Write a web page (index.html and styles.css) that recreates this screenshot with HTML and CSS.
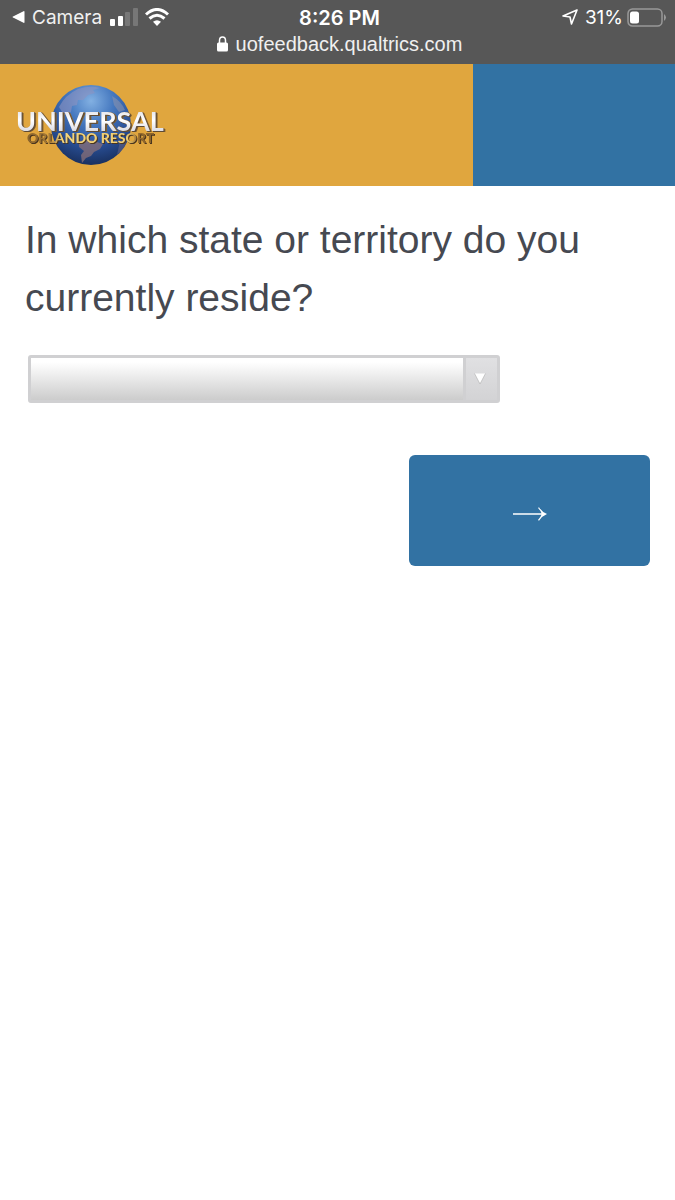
FILE: index.html
```
<!DOCTYPE html>
<html lang="en">
<head>
  <meta charset="UTF-8">
  <meta name="viewport" content="width=device-width, initial-scale=1">
  <title>Universal Orlando Resort Survey</title>
  <link rel="stylesheet" href="styles.css">
</head>
<body>
  <div class="status">
    <div class="status-row">
      <div class="status-left">
        <svg width="13" height="12" viewBox="0 0 13 12"><path d="M11.5 0.2Q12.5 -0.2 12.5 1V11Q12.5 12.200 11.5 11.800L1 6.6Q0 6 1 5.4Z" fill="#fff"/></svg>
        <a href="#" class="back">Camera</a>
        <svg class="signal" width="28" height="18" viewBox="0 0 28 18">
          <rect x="0" y="11" width="5" height="7" rx="1" fill="#fff"/>
          <rect x="8" y="8" width="5" height="10" rx="1" fill="#fff"/>
          <rect x="15" y="4" width="5" height="14" rx="1" fill="#777"/>
          <rect x="23" y="0" width="5" height="18" rx="1" fill="#777"/>
        </svg>
        <svg width="24" height="18" viewBox="0 0 24 18" fill="none" stroke="#fff" stroke-width="3">
          <path d="M1 6.500Q12 -3.500 23 6.500"/>
          <path d="M4.500 10.500Q12 4 19.500 10.500"/>
          <path d="M8 13.800Q12 10.500 16 13.800L12 18Z" fill="#fff" stroke="none"/>
        </svg>
      </div>
      <div class="time">8:26 PM</div>
      <div class="status-right">
        <svg width="16" height="16" viewBox="0 0 16 16" fill="none" stroke="#fff" stroke-width="1.600" stroke-linejoin="round"><path d="M15 1L1 7L8 8L9.500 15Z"/></svg>
        <span class="percent">31%</span>
        <svg width="40" height="19" viewBox="0 0 40 19">
          <rect x="1" y="1" width="34" height="17" rx="4.500" fill="none" stroke="#999" stroke-width="1.500"/>
          <rect x="3" y="3.500" width="9" height="12" rx="2.500" fill="#fff"/>
          <path d="M37 6Q41 9.500 37 13Z" fill="#999"/>
        </svg>
      </div>
    </div>
    <div class="address">
      <svg width="11" height="16" viewBox="0 0 11 16"><rect y="6.500" width="11" height="9" rx="1.500" fill="#fff"/><path d="M2.500 7V4.500Q2.500 1 5.500 1T8.500 4.500V7" fill="none" stroke="#fff" stroke-width="1.500"/></svg>
      <span>uofeedback.qualtrics.com</span>
    </div>
  </div>

  <header class="banner">
    <div class="banner-logo">
      <svg class="logo" width="156" height="88" viewBox="0 0 156 88" role="img" aria-label="Universal Orlando Resort">
        <defs>
          <radialGradient id="globe" cx="50%" cy="20%" r="80%">
            <stop offset="0" stop-color="#82b0e2"/>
            <stop offset="0.350" stop-color="#4679c0"/>
            <stop offset="0.700" stop-color="#294f96"/>
            <stop offset="1" stop-color="#19305f"/>
          </radialGradient>
          <linearGradient id="silver" x1="0" y1="0" x2="0" y2="1">
            <stop offset="0" stop-color="#d4d4dc"/>
            <stop offset="0.500" stop-color="#fff"/>
            <stop offset="1" stop-color="#c8c8d2"/>
          </linearGradient>
          <linearGradient id="gold" x1="0" y1="0" x2="1" y2="0">
            <stop offset="0" stop-color="#8a632a"/>
            <stop offset="0.180" stop-color="#a87c38"/>
            <stop offset="0.280" stop-color="#f2d47c"/>
            <stop offset="0.780" stop-color="#f0cd72"/>
            <stop offset="0.880" stop-color="#94692c"/>
            <stop offset="1" stop-color="#8a632a"/>
          </linearGradient>
        </defs>
        <circle cx="78" cy="44" r="40" fill="url(#globe)"/>
        <path d="M46 26Q52 14 65 8Q77 4 87 7L80 9L82 12L75 14L70 19L65 19L64 24L59 25L58 31L51 34Z" fill="#8d92c0" opacity=".6"/>
        <path d="M99 15Q108 20 112 29L106 31L101 24Z" fill="#8b93ae" opacity=".6"/>
        <path d="M66 60L78 59L90 63L87 68L81 71L78 75L73 77L69 82L68 74L71 70L66 66Z" fill="#8a7078" opacity=".75"/>
        <path d="M107 60L115 57Q111 69 104 74Z" fill="#6b6788" opacity=".5"/>
        <text class="logo-name" x="3" y="50" fill="url(#silver)">UNIVERSAL</text>
        <text class="logo-place" x="14" y="62" fill="url(#gold)">ORLANDO RESORT</text>
      </svg>
    </div>
    <div class="banner-side"></div>
  </header>

  <form class="survey">
    <label class="question" for="state">In which state or territory do you currently reside?</label>
    <div class="dropdown">
      <select id="state" name="state">
        <option value=""></option>
        <option>Alabama</option>
        <option>California</option>
        <option>Florida</option>
        <option>Georgia</option>
        <option>New York</option>
        <option>Puerto Rico</option>
        <option>Texas</option>
      </select>
      <span class="dropdown-arrow">
        <svg width="12" height="12" viewBox="0 0 12 12"><path d="M0.500 0.500H11.500L6 11Z" fill="#fff"/><path d="M0.500 0.500L6 11L11.500 0.500" fill="none" stroke="#b4b4b4" stroke-width=".7"/></svg>
      </span>
    </div>
    <button type="button" class="next" aria-label="Next">
      <svg width="34" height="14" viewBox="0 0 34 14"><path d="M0 6.200H28.500Q27.500 3.500 25 1L26 0.300Q29 5 34 7Q29 9 26 13.700L25 13Q27.500 10.500 28.500 7.800H0Z" fill="#fff"/></svg>
    </button>
  </form>
</body>
</html>
```
FILE: styles.css
```
* { box-sizing: border-box; }
body { margin: 0; background: #fff; font-family: "Liberation Sans", Arial, sans-serif; }
svg { display: block; flex: none; }

.status {
  height: 64px;
  padding: 6px 8px 0 12px;
  background: #575757;
  color: #fff;
  font-family: Inter, sans-serif;
  font-size: 19px;
  line-height: 24px;
}
.status-row {
  display: grid;
  grid-template-columns: 1fr auto 1fr;
  align-items: center;
}
.status-row svg { margin-bottom: 2px; }
.status-left, .status-right, .address { display: flex; align-items: center; }
.back { margin: 0 8px 0 7px; color: #f0f0f0; text-decoration: none; }
.status-row .signal { margin-right: 7px; }
.time { font-size: 20px; font-weight: 600; }
.status-right { justify-content: flex-end; }
.percent { margin: 0 4px 0 7px; }
.address {
  justify-content: center;
  gap: 8px;
  margin-top: 2px;
  color: #f0f0f0;
  font-family: "Liberation Sans", Arial, sans-serif;
  font-size: 20px;
}

.banner { display: flex; height: 122px; }
.banner-logo { width: 70%; padding: 17px 13px; background: #e0a63e; }
.banner-side { flex: 1; background: #3272a3; }
.logo { overflow: visible; }
.logo-name {
  font: 700 27px Lato, sans-serif;
  filter: drop-shadow(1px 1px 0 #5d4a35) drop-shadow(1px 0 0 #816030);
}
.logo-place {
  font: 900 14px Lato, sans-serif;
  filter: drop-shadow(1px 1px 0 #49351f);
}

.survey { display: flex; flex-direction: column; padding: 25px; }
.question { color: #464951; font-size: 39px; line-height: 58px; }
.dropdown { position: relative; width: calc(76% - 3px); height: 48px; margin: 28px 0 52px 3px; }
.dropdown select {
  width: 100%;
  height: 100%;
  padding: 0 44px 0 12px;
  border: 3px solid #d0d0d2;
  border-radius: 3px;
  background: linear-gradient(#fff 10%, #ccc);
  color: #464951;
  font: inherit;
  font-size: 24px;
  appearance: none;
}
.dropdown-arrow {
  position: absolute;
  top: 3px;
  right: 3px;
  bottom: 3px;
  display: flex;
  align-items: center;
  justify-content: center;
  width: 34px;
  padding-right: 3px;
  border-left: 3px solid #d0d0d2;
  background: linear-gradient(#e0e0e2, #d3d3d5);
  pointer-events: none;
}
.next {
  display: flex;
  align-items: center;
  justify-content: center;
  align-self: flex-end;
  width: 241px;
  height: 111px;
  padding: 6px 0 0;
  border: 0;
  border-radius: 6px;
  background: #3272a3;
  cursor: pointer;
}
```
